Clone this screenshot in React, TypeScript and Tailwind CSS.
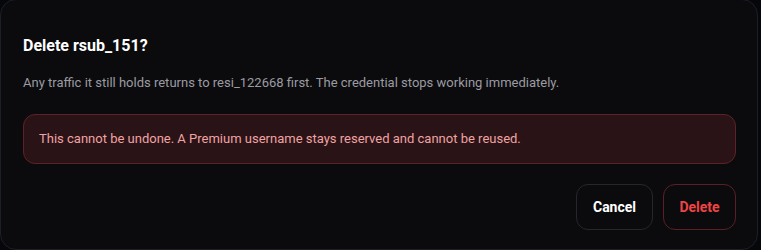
export default function App() {
  return (
    <div className="w-[761px] h-[250px] bg-[#06070b] overflow-hidden" style={{ fontFamily: "Roboto, 'Liberation Sans', sans-serif" }}>
      <div className="w-[758px] h-[251px] -mt-px rounded-2xl border border-[#1d1f26] bg-[#0b0b0e] pl-[22px] pr-[21px] pt-[34px]">
        <h2 className="text-[16px] leading-6 font-bold text-white">Delete rsub_151?</h2>
        <p className="mt-[15px] text-[13px] leading-5 text-[#9b9ba1]">
          Any traffic it still holds returns to resi_122668 first. The credential stops working immediately.
        </p>
        <div className="mt-[21px] h-[50px] flex items-center rounded-xl border border-[#5e2226] bg-[#2a1316] px-[15px] text-[13px] text-[#f0a3a3]">
          This cannot be undone. A Premium username stays reserved and cannot be reused.
        </div>
        <div className="mt-[20px] flex justify-end gap-[10px]">
          <button className="h-[46px] w-[77px] rounded-xl border border-[#26272c] bg-[#0b0b0e] text-[14px] font-bold text-white">Cancel</button>
          <button className="h-[46px] w-[73px] rounded-xl border border-[#5a2024] bg-[#0b0b0e] text-[14px] font-bold text-[#ef4444]">Delete</button>
        </div>
      </div>
    </div>
  );
}
